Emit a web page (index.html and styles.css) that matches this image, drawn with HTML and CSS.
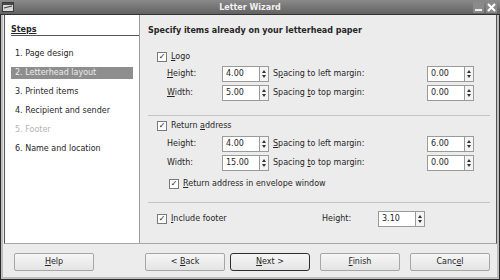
FILE: index.html
```html
<!DOCTYPE html>
<html lang="en">
<head>
    <meta charset="UTF-8">
    <title>Letter Wizard</title>
    <link rel="stylesheet" href="styles.css">
</head>
<body>
    <div class="window">
        <div class="titlebar">
            <svg class="app-icon" width="14" height="14" viewBox="0 0 14 14">
                <rect x="1.5" y="2.5" width="11" height="9" fill="#d8d8d8" stroke="#3a3a3a"/>
                <rect x="2" y="3" width="10" height="2" fill="#4a4a4a"/>
                <path d="M3 8 L11 6" stroke="#3a3a3a"/>
            </svg>
            <span class="title">Letter Wizard</span>
            <div class="controls">
                <svg width="11" height="11" viewBox="0 0 11 11"><rect x="0" y="0" width="11" height="11" fill="#8a8a8a"/><rect x="2" y="7" width="7" height="2" fill="#eee"/></svg>
                <svg width="11" height="11" viewBox="0 0 11 11"><rect x="0" y="0" width="11" height="11" fill="#8a8a8a"/><path d="M2 2 L9 9 M9 2 L2 9" stroke="#fff" stroke-width="2"/></svg>
            </div>
        </div>

        <div class="main">
            <div class="steps">
                <div class="steps-title">Steps</div>
                <ul class="step-list">
                    <li><span>1. Page design</span></li>
                    <li class="active"><span>2. Letterhead layout</span></li>
                    <li><span>3. Printed items</span></li>
                    <li><span>4. Recipient and sender</span></li>
                    <li class="disabled"><span>5. Footer</span></li>
                    <li><span>6. Name and location</span></li>
                </ul>
            </div>

            <div class="page">
                <h1>Specify items already on your letterhead paper</h1>

                <div class="group">
                    <label class="check"><span class="box">✓</span><span><u>L</u>ogo</span></label>
                    <div class="row">
                        <span class="lbl"><u>H</u>eight:</span>
                        <span class="spin"><span class="field">4.00</span><span class="arrows"></span></span>
                        <span class="lbl2">S<u>p</u>acing to left margin:</span>
                        <span class="spin"><span class="field">0.00</span><span class="arrows"></span></span>
                    </div>
                    <div class="row">
                        <span class="lbl"><u>W</u>idth:</span>
                        <span class="spin"><span class="field">5.00</span><span class="arrows"></span></span>
                        <span class="lbl2">Spacing <u>t</u>o top margin:</span>
                        <span class="spin"><span class="field">0.00</span><span class="arrows"></span></span>
                    </div>
                </div>

                <div class="group second">
                    <label class="check"><span class="box">✓</span><span>Return <u>a</u>ddress</span></label>
                    <div class="row">
                        <span class="lbl">Height:</span>
                        <span class="spin"><span class="field">4.00</span><span class="arrows"></span></span>
                        <span class="lbl2"><u>S</u>pacing to left margin:</span>
                        <span class="spin"><span class="field">6.00</span><span class="arrows"></span></span>
                    </div>
                    <div class="row">
                        <span class="lbl">Width:</span>
                        <span class="spin"><span class="field">15.00</span><span class="arrows"></span></span>
                        <span class="lbl2">Spacing <u>t</u>o top margin:</span>
                        <span class="spin"><span class="field">0.00</span><span class="arrows"></span></span>
                    </div>
                    <label class="check sub"><span class="box">✓</span><span><u>R</u>eturn address in envelope window</span></label>
                </div>

                <div class="group last">
                    <div class="footer-row">
                        <label class="check"><span class="box">✓</span><span><u>I</u>nclude footer</span></label>
                        <span class="lbl3">Height:</span>
                        <span class="spin"><span class="field">3.10</span><span class="arrows"></span></span>
                    </div>
                </div>
            </div>
        </div>

        <div class="buttons">
            <button class="btn"><u>H</u>elp</button>
            <div class="nav">
                <button class="btn">&lt; <u>B</u>ack</button>
                <button class="btn default"><u>N</u>ext &gt;</button>
                <button class="btn"><u>F</u>inish</button>
                <button class="btn">Canc<u>e</u>l</button>
            </div>
        </div>
    </div>
</body>
</html>
```

FILE: styles.css
```css
* {
    margin: 0;
    padding: 0;
    box-sizing: border-box;
}

body {
    font-family: 'DejaVu Sans', sans-serif;
    font-size: 8px;
    color: #262626;
    background: #ececec;
}

.window {
    width: 500px;
    height: 280px;
    display: flex;
    flex-direction: column;
    border: 1px solid #2a2a2a;
    border-top: none;
    background: #ececec;
    box-shadow: inset 2px 0 0 #bdbdbd, inset -2px 0 0 #bdbdbd, inset 0 -2px 0 #bdbdbd;
}

.titlebar {
    height: 15px;
    margin: 0 -1px;
    display: flex;
    align-items: center;
    background: linear-gradient(#8a8a8a, #626262);
    border-bottom: 1px solid #333;
    position: relative;
}

.app-icon {
    margin-left: 1px;
}

.title {
    position: absolute;
    left: 0;
    right: 0;
    text-align: center;
    font-weight: bold;
    color: #f2f2f2;
}

.controls {
    margin-left: auto;
    margin-right: 3px;
    display: flex;
    gap: 2px;
}

.main {
    flex: 1;
    display: flex;
    margin: 0 2px 0 3px;
    border-left: 1px solid #555;
    border-right: 1px solid #555;
    border-bottom: 1px solid #a8a8a8;
}

.steps {
    width: 135px;
    background: #fff;
    border-right: 1px solid #9c9c9c;
    padding: 10px 0 0 6px;
}

.steps-title {
    font-weight: bold;
    text-decoration: underline;
    border-bottom: 1px solid #555;
    line-height: 10px;
}

.step-list {
    list-style: none;
    margin-top: 8px;
}

.step-list li {
    height: 19px;
    display: flex;
    align-items: center;
}

.step-list li span {
    width: 122px;
    height: 12px;
    line-height: 12px;
    padding: 0 4px;
}

.step-list li.active span {
    background: #8e8e8e;
    color: #ececec;
}

.step-list li.disabled {
    color: #b4b4b4;
}

.page {
    flex: 1;
    padding: 10px 6px 0 8px;
}

h1 {
    font-size: 8px;
    font-weight: bold;
    line-height: 11px;
    margin-bottom: 13px;
}

.group {
    padding: 0 0 13px 9px;
    border-bottom: 1px solid #c4c4c4;
    margin-bottom: 2px;
}

.group.second {
    padding-bottom: 11px;
}

.group.second .check:first-child {
    margin-bottom: 1px;
}

.group.last {
    border-bottom: none;
    padding-top: 4px;
}

.check {
    display: flex;
    align-items: center;
    height: 15px;
    gap: 4px;
}

.check.sub {
    margin: 4px 0 0 12px;
}

.box {
    width: 10px;
    height: 10px;
    border: 1px solid #7a7a7a;
    background: #fff;
    font-size: 8px;
    line-height: 8px;
    text-align: center;
    color: #111;
}

.row {
    display: flex;
    align-items: center;
    height: 19px;
    padding-left: 10px;
}

.lbl {
    width: 55px;
}

.lbl2 {
    width: 158px;
    padding-left: 4px;
}

.spin {
    display: flex;
    height: 16px;
}

.field {
    width: 38px;
    border: 1px solid #9a9a9a;
    background: #fff;
    line-height: 14px;
    padding-left: 3px;
}

.arrows {
    width: 9px;
    border: 1px solid #9a9a9a;
    border-left: none;
    background: #f4f4f4;
    position: relative;
}

.arrows::before,
.arrows::after {
    content: "";
    position: absolute;
    left: 1.5px;
    border-left: 2.5px solid transparent;
    border-right: 2.5px solid transparent;
}

.arrows::before {
    top: 3px;
    border-bottom: 3px solid #333;
}

.arrows::after {
    bottom: 3px;
    border-top: 3px solid #333;
}

.footer-row {
    display: flex;
    align-items: center;
    height: 19px;
}

.footer-row .check {
    width: 165px;
}

.lbl3 {
    width: 56px;
}

.buttons {
    height: 35px;
    display: flex;
    align-items: center;
    padding: 2px 9px 2px 13px;
}

.nav {
    margin-left: auto;
    display: flex;
    gap: 5px;
}

.nav .btn:nth-child(3),
.nav .btn:nth-child(4) {
    margin-left: 5px;
}

.btn {
    width: 80px;
    height: 18px;
    font-family: 'DejaVu Sans', sans-serif;
    font-size: 8px;
    color: #262626;
    background: linear-gradient(#f6f6f6, #e4e4e4);
    border: 1px solid #a6a6a6;
    border-radius: 2px;
}

.btn.default {
    border: 1px solid #2e2e2e;
    border-radius: 3px;
}
```
